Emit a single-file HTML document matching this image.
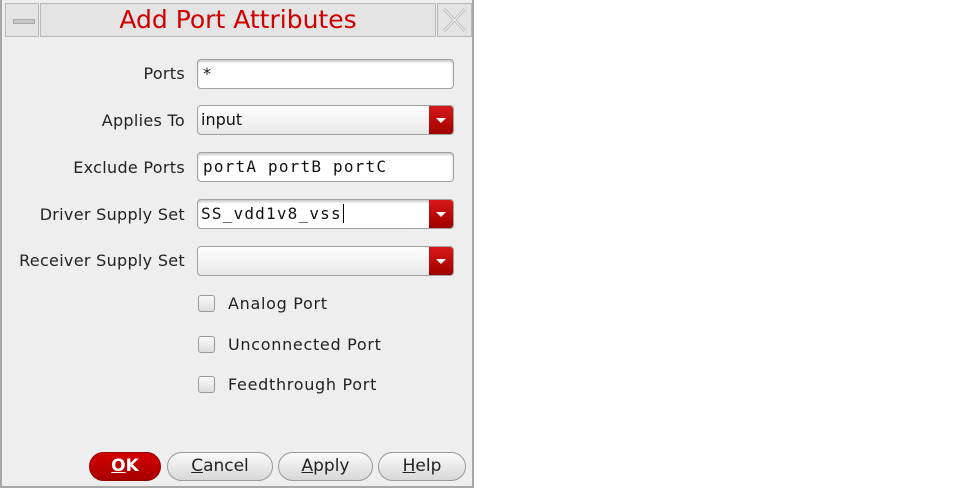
<!DOCTYPE html>
<html><head><style>
body{margin:0;width:963px;height:497px;background:#fff;position:relative;overflow:hidden;font-family:"DejaVu Sans","Liberation Sans",sans-serif;}
.dlg{position:absolute;left:0;top:0;width:470px;height:486px;background:#eeeeee;border:2px solid #a8a8a8;border-top:0;}
.tb{position:absolute;top:3px;height:34px;background:#e4e4e4;border:1px solid #b8b8b8;box-sizing:border-box;}
.lbl{position:absolute;font-size:16px;letter-spacing:0.3px;color:#222;text-align:right;white-space:nowrap;}
.fld{position:absolute;left:197px;width:257px;height:30px;box-sizing:border-box;background:#fff;border:1px solid #a0a0a0;border-radius:4px;font-size:16px;padding:4px 0 0 5px;color:#111;box-shadow:inset 0 2px 2px #ccc;}
.mono{font-family:'DejaVu Sans Mono','Liberation Mono',monospace;letter-spacing:1.2px;}
.combo{background:linear-gradient(#fff,#e8e8e8);box-shadow:none;}
.arr{position:absolute;right:0;top:0;bottom:0;width:24px;background:linear-gradient(#d81818,#a00000);border-radius:0 3px 3px 0;}
.arr:after{content:"";position:absolute;left:7px;top:12px;border-left:5px solid transparent;border-right:5px solid transparent;border-top:5px solid #fff;}
.cb{position:absolute;left:198px;width:17px;height:17px;box-sizing:border-box;border:1px solid #999;border-radius:3px;background:linear-gradient(#fafafa,#ddd);}
.cbl{position:absolute;left:228px;font-size:16px;letter-spacing:0.7px;color:#222;}
.btn{position:absolute;top:452px;height:29px;box-sizing:border-box;border:1px solid #999;border-radius:15px;background:linear-gradient(#fafafa,#d8d8d8);font-size:17px;text-align:center;line-height:27px;color:#222;}
u{text-decoration:underline;}
</style></head><body>
<div class="dlg">
<div class="tb" style="left:3px;width:34px"><div style="position:absolute;left:7px;top:15px;width:20px;height:3px;background:#c8c8c8;border:1px solid #aaa"></div></div>
<div class="tb" style="left:38px;width:396px;text-align:center;color:#d00000;font-size:25px;line-height:32px">Add Port Attributes</div>
<div class="tb" style="left:435px;width:35px"><svg width="33" height="32" viewBox="0 0 33 32"><path d="M6 5L27 27M27 5L6 27" stroke="#bbb" stroke-width="3"/><path d="M6 5L27 27M27 5L6 27" stroke="#f4f4f4" stroke-width="1"/></svg></div>
</div>
<div class="lbl" style="top:64px;right:778px">Ports</div>
<div class="fld" style="top:59px">*</div>
<div class="lbl" style="top:111px;right:778px">Applies To</div>
<div class="fld combo" style="top:105px;padding-left:3px">input<div class="arr"></div></div>
<div class="lbl" style="top:158px;right:778px">Exclude Ports</div>
<div class="fld mono" style="top:152px">portA portB portC</div>
<div class="lbl" style="top:205px;right:778px">Driver Supply Set</div>
<div class="fld mono" style="top:199px;padding-left:3px">SS_vdd1v8_vss<span style="border-left:1px solid #000;margin-left:1px"></span><div class="arr"></div></div>
<div class="lbl" style="top:251px;right:778px">Receiver Supply Set</div>
<div class="fld combo" style="top:246px"><div class="arr"></div></div>
<div class="cb" style="top:295px"></div><div class="cbl" style="top:294px">Analog Port</div>
<div class="cb" style="top:336px"></div><div class="cbl" style="top:335px">Unconnected Port</div>
<div class="cb" style="top:376px"></div><div class="cbl" style="top:375px">Feedthrough Port</div>
<div class="btn" style="left:89px;width:72px;background:linear-gradient(#d40000,#a80000);border-color:#900;color:#fff;font-weight:bold"><u>O</u>K</div>
<div class="btn" style="left:167px;width:106px"><u>C</u>ancel</div>
<div class="btn" style="left:278px;width:95px"><u>A</u>pply</div>
<div class="btn" style="left:378px;width:88px"><u>H</u>elp</div>
</body></html>
